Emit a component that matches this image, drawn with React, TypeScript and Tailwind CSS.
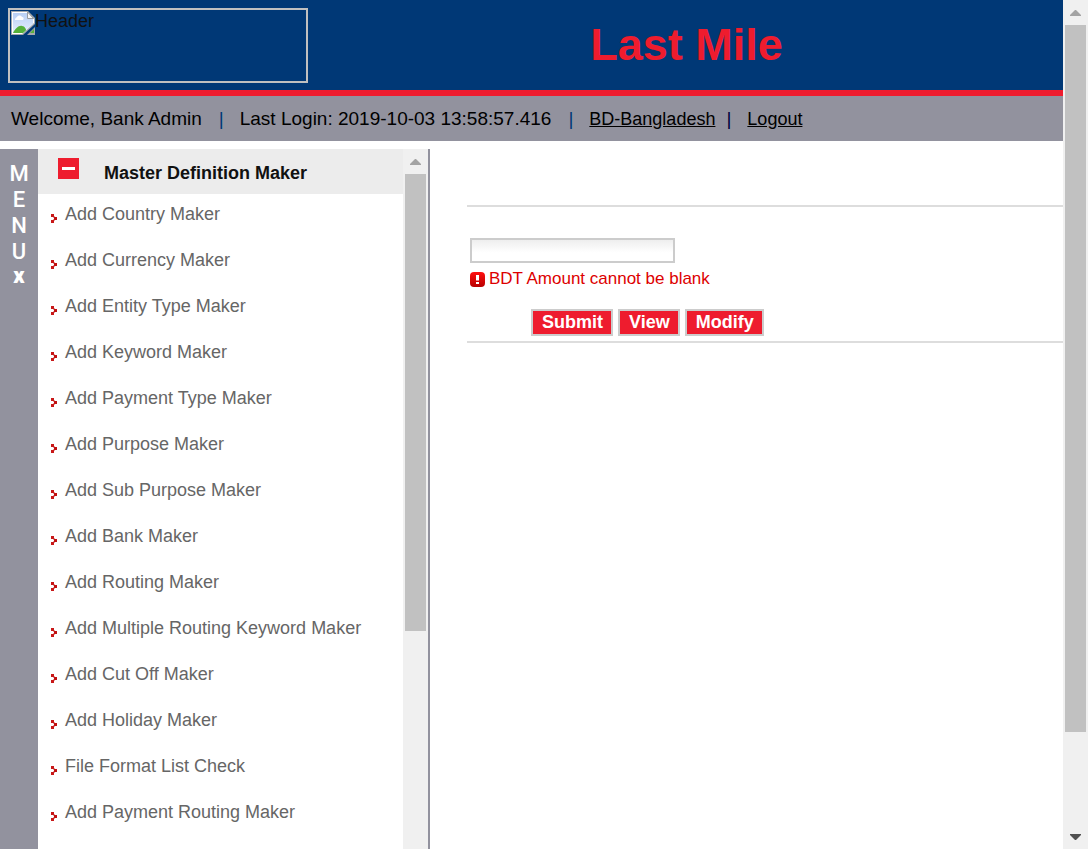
import React from "react";

const menuItems = [
  "Add Country Maker",
  "Add Currency Maker",
  "Add Entity Type Maker",
  "Add Keyword Maker",
  "Add Payment Type Maker",
  "Add Purpose Maker",
  "Add Sub Purpose Maker",
  "Add Bank Maker",
  "Add Routing Maker",
  "Add Multiple Routing Keyword Maker",
  "Add Cut Off Maker",
  "Add Holiday Maker",
  "File Format List Check",
  "Add Payment Routing Maker",
];

function ScrollArrow({ down = false }: { down?: boolean }) {
  return (
    <svg viewBox="0 0 25 25" className="block h-[25px] w-[25px] shrink-0" aria-hidden="true">
      {down ? (
        <path d="M7 10h11v1l-5 5h-1l-5-5z" fill="#505050" />
      ) : (
        <path d="M7 16h11v-1l-5-5h-1l-5 5z" fill="#a3a3a3" />
      )}
    </svg>
  );
}

function Bullet() {
  return (
    <svg viewBox="0 0 6 9" className="h-[9px] w-[6px] shrink-0" shapeRendering="crispEdges" aria-hidden="true">
      <path d="M0 0h3v3H0z" fill="#c81818" />
      <path d="M3 3h3v3H3z" fill="#c01010" />
      <path d="M0 6h3v3H0z" fill="#c81818" />
      <path d="M3 2h1v1H3zM2 3h1v1H2zM3 6h1v1H3zM2 5h1v1H2z" fill="#e39a9a" />
    </svg>
  );
}

function BrokenImage() {
  return (
    <svg viewBox="0 0 24 24" className="block h-6 w-6 shrink-0" aria-hidden="true">
      <defs>
        <linearGradient id="sky" x1="0" y1="0" x2="0" y2="1">
          <stop offset="0" stopColor="#b9d0f5" />
          <stop offset="1" stopColor="#e6effd" />
        </linearGradient>
        <clipPath id="sheet">
          <path d="M1 1h15l7 7v4L11 23H1z" />
        </clipPath>
      </defs>
      <path d="M0 0h17l7 7v6L12 24H0z" fill="#a3a7ab" />
      <path d="M1 1h15l7 7v4L11 23H1z" fill="#fff" />
      <g clipPath="url(#sheet)">
        <path d="M2 2h14l6 6v14H2z" fill="url(#sky)" />
        <path d="M4 9c0-2 1-2 2-3 1-2 4-2 5 0 2 0 2 2 1 3z" fill="#fff" />
        <path d="M2 22c2-4 6-8 9-7 3 0 4 3 5 7z" fill="#55b13a" />
      </g>
      <path d="M16.500 1l6 6.500h-6z" fill="#f7f7f7" stroke="#999da1" strokeWidth="1" />
      <path d="M24 16v8h-8z" fill="#a3a7ab" />
      <path d="M23 18v4h-4z" fill="#55b13a" />
    </svg>
  );
}

export default function App() {
  return (
    <div className="flex h-screen overflow-hidden bg-white font-['Liberation_Sans',Arial,sans-serif] text-[#111]">
      <div className="flex min-w-0 flex-1 flex-col">
        <header className="flex h-24 shrink-0 border-b-[6px] border-[#ee1c2e] bg-[#003876]">
          <div role="img" aria-label="Header" className="m-2 flex h-[75px] w-[300px] shrink-0 border-2 border-[#c0c0c0] p-px text-[18px] leading-5">
            <BrokenImage />
            <span>Header</span>
          </div>
          <h1 className="flex-1 pr-1.5 pt-[19px] text-center text-[45px] font-bold leading-[52px] text-[#ee1c2e]">Last Mile</h1>
        </header>

        <div className="flex h-[45px] shrink-0 items-center whitespace-pre bg-[#92929e] pl-[11px] text-[19px] leading-6 text-black">
          <span>Welcome, Bank Admin</span>
          <span className="ml-[17px] text-[#003876]">|</span>
          <span className="ml-4">Last Login: 2019-10-03 13:58:57.416</span>
          <span className="ml-[17px] text-[#003876]">|</span>
          <a href="#country" className="ml-4 text-[18px] underline">BD-Bangladesh</a>
          <span className="ml-[11px] text-[#00003c]">|</span>
          <a href="#logout" className="ml-4 text-[18px] underline">Logout</a>
        </div>

        <div className="mt-2 flex min-h-0 flex-1">
          <div className="flex w-[38px] shrink-0 flex-col items-center bg-[#92929e] pt-3 font-['Roboto',sans-serif] text-[22px] font-medium leading-[26px] text-white">
            <span>M</span>
            <span>E</span>
            <span>N</span>
            <span>U</span>
            <button type="button" aria-label="Close menu" className="w-full text-[22px] font-black leading-[22px]">x</button>
          </div>

          <aside className="flex w-[392px] shrink-0 border-r-2 border-[#92929e]">
            <nav className="min-w-0 flex-1 overflow-hidden">
              <div className="flex h-[45px] bg-[#ececec] pl-5">
                <button type="button" aria-label="Collapse menu" className="mt-[9px] h-[21px] w-[21px] bg-[#ee1c2e]">
                  <svg viewBox="0 0 21 21" className="block h-[21px] w-[21px]" aria-hidden="true">
                    <path d="M4 9h13v3H4z" fill="#fff" />
                  </svg>
                </button>
                <h2 className="ml-[25px] pt-[13px] text-[18px] font-bold leading-[22px]">Master Definition Maker</h2>
              </div>
              <ul className="pl-[13px] text-[18px] leading-[22px] text-[#666]">
                {menuItems.map((item) => (
                  <li key={item} className="flex h-[46px] items-start pt-[9px]">
                    <a href="#menu" className="flex items-start gap-2">
                      <span className="pt-[11px]"><Bullet /></span>
                      {item}
                    </a>
                  </li>
                ))}
              </ul>
            </nav>
            <div className="flex w-[25px] shrink-0 flex-col bg-[#f0f0f0]">
              <ScrollArrow />
              <div className="mx-0.5 h-[457px] bg-[#c1c1c1]" />
            </div>
          </aside>

          <main className="min-w-0 flex-1 pl-[37px] pt-14">
            <form className="border-y-2 border-[#dddddd] pb-[5px] pt-[31px]" onSubmit={(e) => e.preventDefault()}>
              <input
                type="text"
                aria-label="BDT Amount"
                aria-describedby="amount-error"
                className="ml-[3px] block h-[25px] w-[205px] border-2 border-[#cccccc] bg-linear-to-b from-[#eeeeee] to-white to-60% px-1 text-base outline-none"
              />
              <p id="amount-error" className="ml-[3px] mt-[5px] flex items-center gap-1 text-[17px] leading-[22px] text-[#dd0000]">
                <svg viewBox="0 0 15 15" className="h-[15px] w-[15px]" aria-hidden="true">
                  <defs>
                    <linearGradient id="alert" x1="0" y1="0" x2="0" y2="1">
                      <stop offset="0" stopColor="#ff1010" />
                      <stop offset="1" stopColor="#b80000" />
                    </linearGradient>
                  </defs>
                  <rect width="15" height="15" rx="4" fill="url(#alert)" />
                  <path d="M6 3h3v5.500H6zM6 10h3v2H6z" fill="#fff" />
                </svg>
                BDT Amount cannot be blank
              </p>
              <div className="ml-16 mt-[19px] flex gap-[5px] text-[18px] font-bold leading-[22px] text-white">
                <button type="submit" className="h-[27px] border-2 border-[#cccccc] bg-[#ee1c2e] pb-0.5 pl-[9px] pr-2">Submit</button>
                <button type="button" className="h-[27px] border-2 border-[#cccccc] bg-[#ee1c2e] pb-0.5 pl-[9px] pr-2">View</button>
                <button type="button" className="h-[27px] border-2 border-[#cccccc] bg-[#ee1c2e] pb-0.5 pl-[9px] pr-2">Modify</button>
              </div>
            </form>
          </main>
        </div>
      </div>

      <div className="flex w-[25px] shrink-0 flex-col bg-[#f0f0f0]">
        <ScrollArrow />
        <div className="mx-0.5 h-[707px] bg-[#c1c1c1]" />
        <div className="mt-auto">
          <ScrollArrow down />
        </div>
      </div>
    </div>
  );
}
